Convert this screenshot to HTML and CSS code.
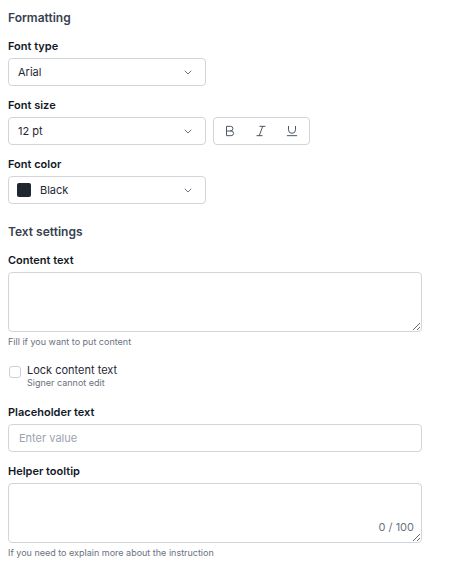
FILE: index.html
```html
<!DOCTYPE html>
<html>
<head>
<meta charset="utf-8">
<link rel="stylesheet" href="styles.css">
</head>
<body>
<div class="panel">
  <section class="section">
    <h2 class="heading">Formatting</h2>
    <div class="field">
      <label class="label">Font type</label>
      <div class="select">
        <span class="select-value">Arial</span>
        <svg class="chev" viewBox="0 0 8 5" width="8" height="5"><path d="M1 1l3 3 3-3" fill="none" stroke="#6b7280" stroke-width="1" stroke-linecap="round" stroke-linejoin="round"/></svg>
      </div>
    </div>
    <div class="field">
      <label class="label">Font size</label>
      <div class="row">
        <div class="select">
          <span class="select-value">12 pt</span>
          <svg class="chev" viewBox="0 0 8 5" width="8" height="5"><path d="M1 1l3 3 3-3" fill="none" stroke="#6b7280" stroke-width="1" stroke-linecap="round" stroke-linejoin="round"/></svg>
        </div>
        <div class="styles-group">
          <button class="style-btn" aria-label="Bold">
            <svg viewBox="0 0 24 24" width="14" height="14"><path d="M6 12h8a4 4 0 0 1 0 8H6V4h7a4 4 0 0 1 0 8" fill="none" stroke="#4b5563" stroke-width="1.7" stroke-linecap="round" stroke-linejoin="round"/></svg>
          </button>
          <button class="style-btn" aria-label="Italic">
            <svg viewBox="0 0 24 24" width="14" height="14"><path d="M19 4h-9M14 20H5M15 4 9 20" fill="none" stroke="#4b5563" stroke-width="1.7" stroke-linecap="round" stroke-linejoin="round"/></svg>
          </button>
          <button class="style-btn" aria-label="Underline">
            <svg viewBox="0 0 24 24" width="14" height="14"><path d="M6 4v6a6 6 0 0 0 12 0V4M4 20h16" fill="none" stroke="#4b5563" stroke-width="1.7" stroke-linecap="round" stroke-linejoin="round"/></svg>
          </button>
        </div>
      </div>
    </div>
    <div class="field">
      <label class="label">Font color</label>
      <div class="select">
        <span class="swatch"></span>
        <span class="select-value">Black</span>
        <svg class="chev" viewBox="0 0 8 5" width="8" height="5"><path d="M1 1l3 3 3-3" fill="none" stroke="#6b7280" stroke-width="1" stroke-linecap="round" stroke-linejoin="round"/></svg>
      </div>
    </div>
  </section>

  <section class="section">
    <h2 class="heading">Text settings</h2>
    <div class="field">
      <label class="label">Content text</label>
      <textarea class="textarea"></textarea>
      <p class="hint">Fill if you want to put content</p>
    </div>
    <div class="check-row">
      <span class="checkbox"></span>
      <div class="check-text">
        <span class="check-label">Lock content text</span>
        <span class="check-sub">Signer cannot edit</span>
      </div>
    </div>
    <div class="field">
      <label class="label">Placeholder text</label>
      <input class="input" type="text" placeholder="Enter value">
    </div>
    <div class="field">
      <label class="label">Helper tooltip</label>
      <div class="textarea-wrap">
        <textarea class="textarea"></textarea>
        <span class="counter">0 / 100</span>
      </div>
      <p class="hint">If you need to explain more about the instruction</p>
    </div>
  </section>
</div>
</body>
</html>
```

FILE: styles.css
```css
* { box-sizing: border-box; }
html, body { margin: 0; padding: 0; background: #fff; }
body {
  font-family: Inter, "Noto Sans", "Liberation Sans", sans-serif;
  color: #111827;
}
.panel {
  width: 414px;
  margin: 0 0 0 8px;
  padding-top: 8px;
  display: flex;
  flex-direction: column;
  gap: 18px;
}
.section {
  display: flex;
  flex-direction: column;
  gap: 12px;
}
.heading {
  margin: 0;
  font-size: 12px;
  line-height: 19px;
  font-weight: 600;
  color: #374151;
}
.field {
  display: flex;
  flex-direction: column;
}
.label {
  font-size: 11px;
  line-height: 14px;
  font-weight: 600;
  color: #111827;
  margin-bottom: 5px;
}
.row {
  display: flex;
  gap: 7px;
  align-items: center;
}
.select {
  width: 198px;
  height: 28px;
  border: 1px solid #d1d5db;
  border-radius: 4px;
  display: flex;
  align-items: center;
  padding: 0 12px 0 9px;
  font-size: 11px;
  color: #1f2937;
}
.select-value { flex: 1; }
.chev { flex: none; margin-right: 1px; }
.swatch {
  width: 14px;
  height: 14px;
  border-radius: 2px;
  background: #1f2630;
  margin-left: -1px;
  margin-right: 9px;
}
.styles-group {
  width: 97px;
  height: 28px;
  border: 1px solid #d1d5db;
  border-radius: 4px;
  display: flex;
  align-items: center;
  padding: 0 1px 0 0;
}
.style-btn {
  width: 31px;
  height: 26px;
  border: 0;
  background: none;
  padding: 0;
  display: flex;
  align-items: center;
  justify-content: center;
}
.textarea {
  display: block;
  width: 414px;
  height: 60px;
  border: 1px solid #d1d5db;
  border-radius: 4px;
  margin: 0;
  padding: 6px 10px;
  font-family: inherit;
  font-size: 11px;
  resize: vertical;
}
.textarea-wrap { position: relative; }
.counter {
  position: absolute;
  right: 8px;
  bottom: 9px;
  font-size: 11px;
  line-height: 14px;
  color: #6b7280;
}
.hint {
  margin: 4px 0 0;
  font-size: 9px;
  line-height: 12px;
  color: #6b7280;
}
.input {
  width: 414px;
  height: 28px;
  border: 1px solid #d1d5db;
  border-radius: 4px;
  padding: 0 10px;
  font-family: inherit;
  font-size: 11px;
  margin: 0;
}
.input::placeholder { color: #9ca3af; }
.check-row {
  display: flex;
  gap: 6px;
  margin-top: 3px;
  margin-bottom: 4px;
}
.checkbox {
  width: 12px;
  height: 12px;
  border: 1px solid #cbd0d8;
  border-radius: 3px;
  margin: 3px 0 0 1px;
  flex: none;
}
.check-text {
  display: flex;
  flex-direction: column;
}
.check-label {
  font-size: 11px;
  line-height: 14px;
  color: #1f2937;
}
.check-sub {
  font-size: 9px;
  line-height: 12px;
  color: #6b7280;
}
```
